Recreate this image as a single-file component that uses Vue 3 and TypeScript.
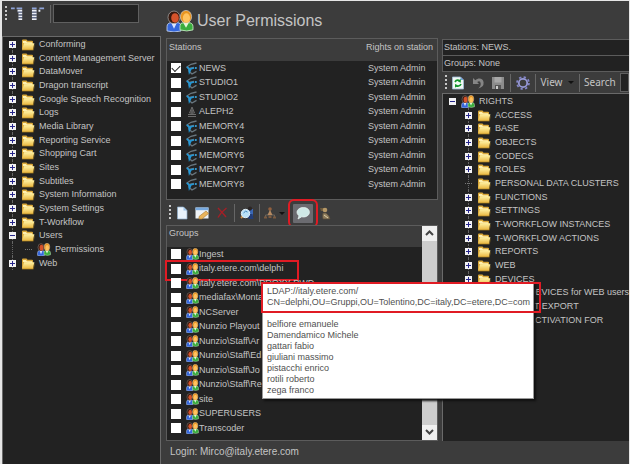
<script setup lang="ts">
import { ref } from 'vue'

interface TreeItem {
  label: string
  icon: 'folder' | 'users'
  depth: number
  toggle?: '+' | '-'
  clip?: string
}

const item = (label: string, toggle: '+' | '-' | undefined = '+', depth = 0, icon: 'folder' | 'users' = 'folder'): TreeItem =>
  ({ label, icon, depth, toggle })

const navigation: TreeItem[] = [
  ...['Conforming', 'Content Management Server', 'DataMover', 'Dragon transcript', 'Google Speech Recognition',
    'Logs', 'Media Library', 'Reporting Service', 'Shopping Cart', 'Sites', 'Subtitles', 'System Information',
    'System Settings', 'T-Workflow'].map((l) => item(l)),
  item('Users', '-'),
  { label: 'Permissions', icon: 'users', depth: 1 },
  item('Web'),
]

const rights: TreeItem[] = [
  item('RIGHTS', '-', 0, 'users'),
  ...['ACCESS', 'BASE', 'OBJECTS', 'CODECS', 'ROLES'].map((l) => item(l, '+', 1)),
  { label: 'PERSONAL DATA CLUSTERS', icon: 'folder', depth: 1 },
  ...['FUNCTIONS', 'SETTINGS', 'T-WORKFLOW INSTANCES', 'T-WORKFLOW ACTIONS', 'REPORTS', 'WEB', 'DEVICES'].map((l) => item(l, '+', 1)),
  { label: 'DEVICES for WEB users', icon: 'folder', depth: 1, clip: 'wide' },
  { label: 'T EXPORT', icon: 'folder', depth: 1, clip: 'wider' },
  { label: 'ACTIVATION FOR', icon: 'folder', depth: 1, clip: 'wide' },
]

const stations = ref(
  ['NEWS', 'STUDIO1', 'STUDIO2', 'ALEPH2', 'MEMORY4', 'MEMORY5', 'MEMORY6', 'MEMORY7', 'MEMORY8'].map((name) => ({
    name,
    right: 'System Admin',
    checked: name === 'NEWS',
    icon: name === 'ALEPH2' ? 'offline' : 'station',
  })),
)

const groups = ref(
  ['Ingest', 'italy.etere.com\\delphi', 'italy.etere.com\\PROXY PWD', 'mediafax\\Monta', 'NCServer', 'Nunzio Playout',
    'Nunzio\\Staff\\Ar', 'Nunzio\\Staff\\Ed', 'Nunzio\\Staff\\Jo', 'Nunzio\\Staff\\Re', 'site', 'SUPERUSERS', 'Transcoder',
  ].map((name, index) => ({ name, checked: false, marked: index === 1 })),
)

const members = ['belfiore emanuele', 'Damendamico Michele', 'gattari fabio', 'giuliani massimo', 'pistacchi enrico', 'rotili roberto', 'zega franco']
const filter = ref('')
const search = ref('')
</script>

<template>
  <div class="app">
    <svg class="symbols" aria-hidden="true">
      <linearGradient id="gold" x1="0" y1="0" x2="0" y2="1">
        <stop offset="0" stop-color="#fff3a6" /><stop offset="1" stop-color="#e9b53c" />
      </linearGradient>
      <symbol id="folder" viewBox="0 0 14 13">
        <path d="M1 11.5V2.5Q1 1.5 2 1.5h3.5l1 1.3H11q1 0 1 1v7.7z" fill="#d9a738" />
        <path d="M2 5V3h3l1 1.3h5V6z" fill="#fff0b0" />
        <path d="M1 12l2-6.8h10.4L12 12z" fill="url(#gold)" />
        <path d="M1 12.2h11.3l1-5" fill="none" stroke="#8a681d" stroke-width=".7" />
      </symbol>
      <symbol id="users" viewBox="0 0 28 21" preserveAspectRatio="none">
        <path d="M1 20v-4q0-4 5-4h5q4 0 4 4v4q-7 2-14 0z" fill="#3567dc" stroke="#c8d5ee" stroke-width=".8" />
        <path d="M5 12l3 6 3-6z" fill="#dbe6ff" />
        <circle cx="8" cy="7" r="6" fill="#38190f" stroke="#bbb" stroke-width=".6" />
        <ellipse cx="9" cy="7.6" rx="3.8" ry="4.6" fill="#d5532b" />
        <path d="M14 19v-4q0-3 4-3h4q5 0 5 4v3q-6 2-13 0z" fill="#39ad3d" stroke="#ceeccb" stroke-width=".8" />
        <path d="M17 12l3 5 3-5z" fill="#e5f5d8" />
        <ellipse cx="20" cy="6.4" rx="5.6" ry="6" fill="#e99520" stroke="#ddd" stroke-width=".6" />
        <ellipse cx="20.4" cy="7.6" rx="3.6" ry="4.4" fill="#ffc35f" />
      </symbol>
      <symbol id="station" viewBox="0 0 12 13">
        <path d="M10.5 1L5 2.3 1.2 4.800 3 6.500 8 5.500M3 6.500L3.300 9.600 6 12l4.500-2.600" fill="none" stroke="#68767f" stroke-width="1.300" />
        <path d="M.8 4.800l2.200 2 .4 3.200 1.500-3.200 3-.8" fill="none" stroke="#2497d5" stroke-width="1.700" />
        <circle cx="9.800" cy="6" r="1.100" fill="#36a8e4" />
      </symbol>
      <symbol id="offline" viewBox="0 0 12 13">
        <path d="M6 2L3.500 8h5zM2 9.500h8M2 11.500h8M6 3v6M4.500 6h3" fill="none" stroke="#6c6c6c" stroke-width="1" />
      </symbol>
      <symbol id="columns" viewBox="0 0 15 15">
        <path d="M0 1.500h4M6 1.500h6" stroke="#8fa4d8" stroke-width="2" />
        <path d="M7 4h5M8 7h4M8 10h4M8 13h4" stroke="#eef1f8" stroke-width="2" />
        <path d="M7 5.500h5M8 8.500h4M8 11.500h4" stroke="#5d6b93" />
      </symbol>
      <symbol id="rows" viewBox="0 0 15 15">
        <path d="M1 1.500h5M9 1.500h5" stroke="#8fa4d8" stroke-width="2" />
        <path d="M1 4h5M1 7h5M1 10h5M1 13h5M8 4h2" stroke="#eef1f8" stroke-width="2" />
        <path d="M1 5.500h5M1 8.500h5M1 11.500h5" stroke="#5d6b93" />
      </symbol>
      <symbol id="page" viewBox="0 0 14 14">
        <path d="M2.500 1h6L12 4.500V13H2.500z" fill="#e9f3fc" stroke="#8daccc" stroke-width=".7" />
        <path d="M8.500 1v3.500H12z" fill="#9cc2e6" />
      </symbol>
      <symbol id="edit" viewBox="0 0 14 14">
        <path d="M.5 1.500h13v11H.5z" fill="#eff2f5" /><path d="M.5 1.500h13v2.700H.5z" fill="#77a9df" />
        <path d="M4 10.500L11 5l2.500 2.500L7 13H4z" fill="#e9b45c" stroke="#a8772d" stroke-width=".6" />
      </symbol>
      <symbol id="remove" viewBox="0 0 14 14">
        <path d="M3 2q4 4 8 9M11.500 2Q6 6 3 11.500" fill="none" stroke="#a51f26" stroke-width="1.400" />
      </symbol>
      <symbol id="find" viewBox="0 0 14 14">
        <path d="M6 12V6l3-3h4v8z" fill="#3a67b5" /><circle cx="10" cy="2.600" r="2.100" fill="#2b2524" />
        <path d="M8.500 13l1-5h3l1 5z" fill="#223d78" />
        <path d="M1 12l3-3" stroke="#c9914b" stroke-width="2" />
        <circle cx="5.500" cy="7.500" r="4.200" fill="#b9e1f7" stroke="#e0edf4" />
        <path d="M3.500 7q2-3 4-1" fill="none" stroke="#4386bd" />
      </symbol>
      <symbol id="hierarchy" viewBox="0 0 14 14">
        <path d="M7 4v5M2.500 12V9h9v3" fill="none" stroke="#6b645c" />
        <circle cx="7" cy="3" r="1.800" fill="#93603e" /><path d="M4.500 9l2.500-5 2.500 5z" fill="#b58a62" />
        <path d="M1 10.500h3v2H1zM10 10.500h3v2h-3zM5.500 9.500h3V12h-3z" fill="#7b5a40" />
      </symbol>
      <symbol id="bubble" viewBox="0 0 14 14">
        <path d="M7.400 1.500c3.500 0 6 2 6 4.700s-2.600 4.800-6 4.800l-1.700-.2L2 13l1-3.300C1.700 8.800 1 7.600 1 6.300 1 3.600 3.900 1.500 7.400 1.500z" fill="#cfe8e6" stroke="#eef8f7" stroke-width=".7" />
      </symbol>
      <symbol id="person" viewBox="0 0 14 14">
        <path d="M2 2h5v3H3z" fill="#6d5a3c" />
        <circle cx="7" cy="4" r="2.300" fill="#b59868" />
        <path d="M5 13q-1-3 0-6h3l3 3 1 3z" fill="#8e7c5d" stroke="#574b38" stroke-width=".7" />
        <path d="M6 9l4 3" stroke="#ded0a7" />
      </symbol>
      <symbol id="refresh" viewBox="0 0 14 14">
        <path d="M1.500 1h8L12.500 4v9h-11z" fill="#f1f9f4" stroke="#9fbbd8" stroke-width=".8" /><path d="M9.500 1v3h3z" fill="#6d9edc" />
        <path d="M4 6q1.500-3 5-1.300M10 8q-1.500 3.300-5.200 1.700" fill="none" stroke="#10952c" stroke-width="1.700" />
        <path d="M9.800 3v3.800L7 5.400zM4 11.800V7.900l2.900 1.400z" fill="#10952c" />
      </symbol>
      <symbol id="undo" viewBox="0 0 14 14">
        <path d="M2 2v6h6L6.200 6Q9 4 9.600 7t-2.400 5.500Q13 11 12.600 6.500C12.300 2 7.500 1.200 4.300 4.200z" fill="#858585" />
      </symbol>
      <symbol id="save" viewBox="0 0 14 14">
        <path d="M1 1h12v12H1z" fill="#8c8c8c" /><path d="M3.500 1h7v5.500h-7z" fill="#a8a8a8" />
        <path d="M4 9h6v4H4z" fill="#555" /><path d="M5 10h2v3H5z" fill="#ccc" />
      </symbol>
      <symbol id="gear" viewBox="0 0 14 14">
        <circle cx="7" cy="7" r="4.200" fill="none" stroke="#9799d6" stroke-width="1.800" />
        <circle cx="7" cy="7" r="6" fill="none" stroke="#8587ca" stroke-width="1.700" stroke-dasharray="2.350 2.350" />
      </symbol>
    </svg>

    <aside class="side">
      <div class="bar side-bar">
        <i class="grip"></i>
        <button type="button" class="tool" aria-label="Collapse columns"><svg class="glyph"><use href="#columns" /></svg></button>
        <button type="button" class="tool next" aria-label="Expand rows"><svg class="glyph"><use href="#rows" /></svg></button>
        <i class="sep"></i>
        <input v-model="filter" class="field" type="text" aria-label="Filter modules" />
      </div>
      <ul class="tree nav">
        <li v-for="node in navigation" :key="node.label" :class="['node', 'depth' + node.depth]">
          <button v-if="node.toggle" type="button" :class="['toggle', { open: node.toggle === '-' }]" :aria-label="node.label + ' branch'"></button>
          <i v-else class="branch"></i>
          <svg class="tree-icon"><use :href="'#' + node.icon" /></svg>
          <span>{{ node.label }}</span>
        </li>
      </ul>
    </aside>

    <main class="main">
      <h1 class="title"><svg class="title-icon"><use href="#users" /></svg>User Permissions</h1>
      <table class="stations">
        <thead>
          <tr><th>Stations</th><th class="right-col">Rights on station</th></tr>
        </thead>
        <tbody>
          <tr v-for="station in stations" :key="station.name">
            <td>
              <label class="entry">
                <input v-model="station.checked" type="checkbox" class="check" />
                <svg class="station-icon"><use :href="'#' + station.icon" /></svg>{{ station.name }}
              </label>
            </td>
            <td class="right-cell">{{ station.right }}</td>
          </tr>
        </tbody>
      </table>

      <div class="bar main-bar">
        <i class="grip"></i>
        <button type="button" class="tool" aria-label="New"><svg class="glyph"><use href="#page" /></svg></button>
        <button type="button" class="tool" aria-label="Edit"><svg class="glyph"><use href="#edit" /></svg></button>
        <button type="button" class="tool" aria-label="Delete"><svg class="glyph"><use href="#remove" /></svg></button>
        <i class="sep"></i>
        <button type="button" class="tool" aria-label="Find user"><svg class="glyph"><use href="#find" /></svg></button>
        <i class="sep"></i>
        <button type="button" class="tool menu" aria-label="Hierarchy"><svg class="glyph"><use href="#hierarchy" /></svg><i class="caret"></i></button>
        <i class="sep"></i>
        <button type="button" class="tool pressed" aria-label="Show members"><svg class="glyph"><use href="#bubble" /></svg></button>
        <button type="button" class="tool" aria-label="User"><svg class="glyph"><use href="#person" /></svg></button>
      </div>

      <section class="groups">
        <div class="group-body">
          <h2 class="group-head">Groups</h2>
          <ul class="group-list">
            <li v-for="group in groups" :key="group.name" :class="{ marked: group.marked }">
              <label class="entry">
                <input v-model="group.checked" type="checkbox" class="check" />
                <svg class="user-icon"><use href="#users" /></svg>{{ group.name }}
              </label>
            </li>
          </ul>
        </div>
        <div class="scroll">
          <button type="button" class="arrow" aria-label="Scroll up"><svg viewBox="0 0 9 6"><path d="M1 5l3.500-3.500L8 5" /></svg></button>
          <button type="button" class="arrow" aria-label="Scroll down"><svg viewBox="0 0 9 6"><path d="M1 1l3.500 3.500L8 1" /></svg></button>
        </div>
      </section>
      <footer class="login">Login: Mirco@italy.etere.com</footer>
    </main>

    <section class="detail">
      <p class="info">Stations: NEWS.</p>
      <p class="info">Groups: None</p>
      <div class="bar detail-bar">
        <i class="grip"></i>
        <button type="button" class="tool" aria-label="Refresh"><svg class="glyph"><use href="#refresh" /></svg></button>
        <button type="button" class="tool" aria-label="Undo"><svg class="glyph"><use href="#undo" /></svg></button>
        <button type="button" class="tool" aria-label="Save"><svg class="glyph"><use href="#save" /></svg></button>
        <i class="sep"></i>
        <button type="button" class="tool" aria-label="Options"><svg class="glyph"><use href="#gear" /></svg></button>
        <i class="sep"></i>
        <button type="button" class="tool view">View<i class="caret"></i></button>
        <i class="sep"></i>
        <label class="find" for="rights-search">Search</label>
        <input id="rights-search" v-model="search" class="field" type="text" />
      </div>
      <ul class="tree rights">
        <li v-for="node in rights" :key="node.label" :class="['node', 'depth' + node.depth, node.clip]">
          <button v-if="node.toggle" type="button" :class="['toggle', { open: node.toggle === '-' }]" :aria-label="node.label + ' branch'"></button>
          <i v-else class="branch"></i>
          <svg class="tree-icon"><use :href="'#' + node.icon" /></svg>
          <span>{{ node.label }}</span>
        </li>
      </ul>
    </section>

    <div class="tooltip" role="tooltip">
      <p class="path">LDAP://italy.etere.com/<br />CN=delphi,OU=Gruppi,OU=Tolentino,DC=italy,DC=etere,DC=com</p>
      <ul class="members"><li v-for="member in members" :key="member">{{ member }}</li></ul>
    </div>
  </div>
</template>

<style>
body { background: #3c3c3c; }
</style>

<style scoped>
* { box-sizing: border-box; margin: 0; padding: 0; }
.app {
  position: relative;
  display: grid;
  grid-template-columns: 160fr 272fr 187fr;
  column-gap: 4px;
  min-height: 100vh;
  padding: 2px 0 0 2px;
  border: solid #e6e6e6;
  border-width: 1px 1px 0 0;
  box-shadow: inset 2px 0 #e6e6e6;
  background: #3c3c3c;
  color: #c4c4c4;
  font: 9px/13px "Liberation Sans", Arial, sans-serif;
  overflow: hidden;
}
.symbols { position: absolute; width: 0; height: 0; }
ul { list-style: none; }
button { border: 0; background: none; color: inherit; font: inherit; }
.side, .main, .detail { display: flex; flex-direction: column; min-width: 0; }
.side { padding-right: 1px; }

.bar { display: flex; align-items: center; flex: none; }
.grip {
  width: 2px;
  height: 16px;
  margin: 0 1px 0 3px;
  background: repeating-linear-gradient(#c8c8c8 0 2px, transparent 2px 4px);
}
.sep { width: 1px; height: 18px; background: #666; }
.tool { display: flex; align-items: center; justify-content: center; width: 20px; height: 19px; }
.glyph { width: 14px; height: 14px; }
.caret { border: 3px solid transparent; border-top-color: #111; border-bottom: 0; }
.field {
  flex: 1;
  min-width: 0;
  height: 19px;
  border: 1px solid #606060;
  border-radius: 0;
  background: #222;
  color: inherit;
  font: inherit;
}
.side-bar { height: 33px; padding: 0 22px 12px 0; }
.side-bar .sep { margin: 0 2px; }

.tree { flex: 1; border: 1px solid #6a6a6a; border-bottom: 0; background: #222; }
.node { position: relative; display: flex; align-items: center; height: 14px; padding-left: 6px; white-space: nowrap; }
.node:nth-child(3n) { height: 13px; }
.node::before { content: ""; position: absolute; left: 9px; top: 0; bottom: 0; border-left: 1px dotted #666; }
.node:first-child::before { top: 7px; }
.toggle {
  position: relative;
  flex: none;
  width: 7px;
  height: 7px;
  background:
    linear-gradient(#26268c, #26268c) center / 5px 1px no-repeat,
    linear-gradient(#26268c, #26268c) center / 1px 5px no-repeat,
    #f2f2f4;
}
.toggle.open { background: linear-gradient(#26268c, #26268c) center / 5px 1px no-repeat, #f2f2f4; }
.branch { flex: none; width: 7px; border-top: 1px dotted #777; }
.tree-icon { flex: none; width: 14px; height: 13px; margin: 0 4px 0 5px; }
.nav .depth1 { padding-left: 22px; }
.rights .depth1 { padding-left: 22px; }
.rights .depth1::before { left: 25px; }
.rights .node:first-child::before { display: none; }
.rights .wide span { padding-left: 34px; }
.rights .wider span { padding-left: 39px; }
.rights .wide::before, .rights .wider::before { display: none; }

.title { display: flex; align-items: center; gap: 3px; height: 35px; font-size: 16px; font-weight: 400; line-height: 20px; }
.title-icon { width: 28px; height: 22px; }
.stations { width: 100%; border-spacing: 0; border: 1px solid #5c5c5c; background: #222; }
.stations thead { background: #3c3c3c; }
.stations th { height: 22px; padding: 0 0 5px 2px; font-weight: 400; text-align: left; }
.stations .right-col { width: 73px; white-space: nowrap; }
.stations td { height: 14px; }
.stations tr:nth-child(even) td { height: 15px; }
.stations .right-cell { padding-left: 4px; }
.stations tbody::after { content: ""; display: block; height: 8px; }
.entry { display: flex; align-items: center; white-space: nowrap; padding-left: 4px; }
.check {
  flex: none;
  width: 10px;
  height: 10px;
  margin-right: 5px;
  appearance: none;
  background: #fff;
}
.check:checked::after {
  content: "";
  display: block;
  width: 7px;
  height: 4px;
  margin: 2px 1px;
  border: solid #222;
  border-width: 0 0 1px 1px;
  transform: rotate(-45deg);
}
.station-icon { width: 12px; height: 13px; margin-right: 1px; }
.user-icon { width: 13px; height: 12px; }

.main-bar { height: 25px; padding-top: 1px; }
.main-bar .sep { margin: 0 2px; }
.menu { gap: 2px; width: 24px; }
.pressed { margin: 0 2px; background: #6b6b70; outline: 2px solid #e01b24; outline-offset: 3px; border-radius: 1px; }
.groups { display: flex; flex: 1; border: 1px solid #5c5c5c; background: #222; }
.group-body { flex: 1; min-width: 0; }
.group-head { height: 21px; padding: 1px 2px; background: #3c3c3c; font-size: 9px; font-weight: 400; }
.group-list li { position: relative; display: flex; align-items: center; height: 14px; }
.group-list li:nth-child(even) { height: 15px; }
.marked::after { content: ""; position: absolute; left: -2px; top: -1px; width: 130px; height: 17px; border: 2px solid #e01b24; }
.scroll { display: flex; flex-direction: column; justify-content: space-between; width: 15px; background: #cdcdcd; }
.arrow { height: 15px; background: #f0f0f0; }
.arrow svg { width: 9px; height: 6px; fill: none; stroke: #444; stroke-width: 2; }
.login { flex: none; height: 23px; padding: 4px 4px 0; font-size: 10px; }

.detail { padding: 36px 0 23px; }
.info { height: 17px; padding: 1px 0 0 1px; border: 1px solid #5c5c5c; border-right: 0; background: #222; }
.info + .info { margin-top: -1px; }
.detail-bar { height: 21px; }
.detail-bar .sep { margin: 0 2px; }
.view { gap: 6px; width: 39px; font: 10px/13px "Noto Sans", sans-serif; }
.find { margin: 0 4px 0 2px; font: 10px/13px "Noto Sans", sans-serif; }
.rights { border-width: 1px 0 1px 1px; }

.tooltip {
  position: absolute;
  left: 262px;
  top: 281px;
  width: 272px;
  height: 117px;
  background: #fff;
  border: 1px solid #999;
  box-shadow: 2px 2px 2px #111;
  color: #505050;
  line-height: 11px;
}
.path {
  width: 280px;
  height: 31px;
  margin: -1px 0 6px -2px;
  padding: 2px 4px;
  border: 2px solid #e01b24;
  white-space: nowrap;
}
.members { padding-left: 4px; }
</style>
